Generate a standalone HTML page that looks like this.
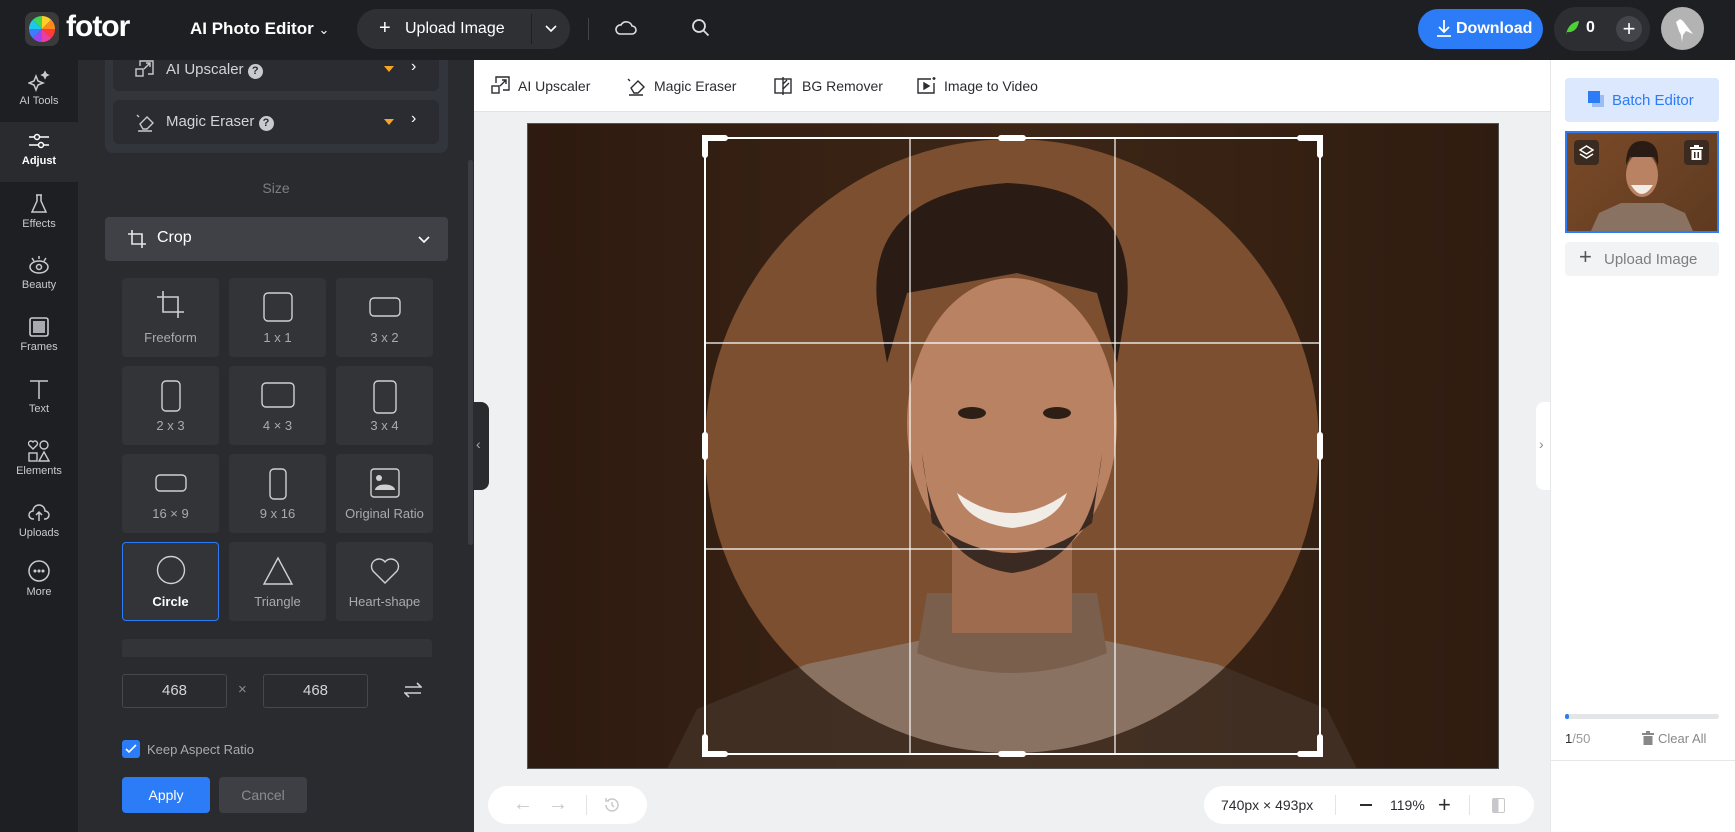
<!DOCTYPE html>
<html><head><meta charset="utf-8"><style>
*{box-sizing:border-box;margin:0;padding:0}
body{width:1735px;height:832px;overflow:hidden;font-family:"Liberation Sans",sans-serif;background:#1e1f23;position:relative}
.a{position:absolute}
.hdr{left:0;top:0;width:1735px;height:60px;background:#1e1f23}
.side{left:0;top:60px;width:78px;height:772px;background:#1e1f23}
.si{position:absolute;left:0;width:78px;text-align:center;color:#c9cacd;font-size:11px}
.si svg{display:block;margin:0 auto 3px}
.panel{left:78px;top:60px;width:396px;height:772px;background:#2a2b2f;overflow:hidden}
.cell{position:absolute;width:97px;height:79px;background:#333438;border-radius:4px;color:#a9aaae;font-size:13px;text-align:center}
.cell svg{position:absolute;left:50%;transform:translateX(-50%);top:14px}
.cell span{position:absolute;left:0;right:0;top:52px}
.tb{color:#2b2c30;font-size:14px;top:78px}
</style></head><body>
<div class="a hdr">
 <svg class="a" style="left:25px;top:12px" width="34" height="34" viewBox="0 0 34 34"><rect width="34" height="34" rx="8" fill="#3a3a3a"/><g transform="translate(17 17)">
 <path d="M0 0L0-13A13 13 0 0 1 9.2-9.2Z" fill="#ffcf26"/><path d="M0 0L9.2-9.2A13 13 0 0 1 13 0Z" fill="#ff8a1c"/><path d="M0 0L13 0A13 13 0 0 1 9.2 9.2Z" fill="#ff3b3b"/><path d="M0 0L9.2 9.2A13 13 0 0 1 0 13Z" fill="#e83fa0"/><path d="M0 0L0 13A13 13 0 0 1-9.2 9.2Z" fill="#9b45f0"/><path d="M0 0L-9.2 9.2A13 13 0 0 1-13 0Z" fill="#3d7bff"/><path d="M0 0L-13 0A13 13 0 0 1-9.2-9.2Z" fill="#1fc8e8"/><path d="M0 0L-9.2-9.2A13 13 0 0 1 0-13Z" fill="#3fd65a"/></g></svg>
 <div class="a" style="left:66px;top:10px;color:#fff;font-size:30px;font-weight:bold;letter-spacing:-1px">fotor</div>
 <div class="a" style="left:190px;top:19px;color:#fff;font-size:17px;font-weight:bold">AI Photo Editor <span style="font-weight:normal;font-size:13px">&#8964;</span></div>
 <div class="a" style="left:357px;top:9px;width:213px;height:40px;border-radius:20px;background:#2f3034"></div>
 <div class="a" style="left:379px;top:17px;color:#fff;font-size:20px">+</div>
 <div class="a" style="left:405px;top:20px;color:#fff;font-size:16px">Upload Image</div>
 <div class="a" style="left:531px;top:14px;width:1px;height:30px;background:#1e1f23"></div>
 <svg class="a" style="left:544px;top:24px" width="14" height="10"><path d="M2 2l5 5 5-5" stroke="#fff" stroke-width="1.6" fill="none"/></svg>
 <div class="a" style="left:588px;top:18px;width:1px;height:22px;background:#444"></div>
 <svg class="a" style="left:614px;top:18px" width="24" height="20"><path d="M6 16h12a4 4 0 0 0 0-8 6 6 0 0 0-11-1 4.5 4.5 0 0 0-1 9z" stroke="#ddd" stroke-width="1.6" fill="none"/></svg>
 <svg class="a" style="left:691px;top:18px" width="20" height="20"><circle cx="8" cy="8" r="6" stroke="#ddd" stroke-width="1.8" fill="none"/><path d="M12.5 12.5l5 5" stroke="#ddd" stroke-width="1.8"/></svg>
 <div class="a" style="left:1418px;top:9px;width:125px;height:40px;border-radius:20px;background:#2b7cf6"></div>
 <svg class="a" style="left:1435px;top:19px" width="18" height="18"><path d="M9 1v12M4 8l5 5 5-5M2 17h14" stroke="#fff" stroke-width="1.8" fill="none"/></svg>
 <div class="a" style="left:1456px;top:20px;color:#fff;font-size:16px;font-weight:bold">Download</div>
 <div class="a" style="left:1554px;top:7px;width:96px;height:44px;border-radius:22px;background:#2d2e32"></div>
 <svg class="a" style="left:1564px;top:19px" width="16" height="18"><path d="M2 16C3 8 8 3 15 2 14 10 9 14 3 13" fill="#4cd137"/></svg>
 <div class="a" style="left:1586px;top:19px;color:#fff;font-size:16px;font-weight:bold">0</div>
 <div class="a" style="left:1616px;top:16px;width:26px;height:26px;border-radius:13px;background:#44454a;color:#fff;font-size:22px;line-height:25px;text-align:center">+</div>
 <div class="a" style="left:1661px;top:7px;width:43px;height:43px;border-radius:22px;background:#b3b3b3"></div>
 <svg class="a" style="left:1670px;top:14px" width="26" height="30"><path d="M6 8l4-3 3 2 10 13-7-3-3 4-1 7-1-7-2-4z" fill="#fff"/></svg>
</div>

<div class="a side">
 <div class="si" style="top:10px"><svg width="22" height="22" viewBox="0 0 22 22" fill="none" stroke="#c9cacd" stroke-width="1.5"><path d="M8 6l2 5 5 2-5 2-2 5-2-5-5-2 5-2z"/><path d="M17 2l1 2 2 1-2 1-1 2-1-2-2-1 2-1z" fill="#c9cacd"/></svg>AI Tools</div>
 <div class="a" style="left:0;top:62px;width:78px;height:60px;background:#2a2b2f"></div>
 <div class="si" style="top:70px;color:#fff;font-weight:bold"><svg width="22" height="22" viewBox="0 0 22 22" fill="none" stroke="#fff" stroke-width="1.5"><path d="M1 7h20M1 15h20"/><circle cx="9" cy="7" r="2.5" fill="#2a2b2f"/><circle cx="13" cy="15" r="2.5" fill="#2a2b2f"/></svg>Adjust</div>
 <div class="si" style="top:133px"><svg width="22" height="22" viewBox="0 0 22 22" fill="none" stroke="#c9cacd" stroke-width="1.5"><path d="M8 2h6M9 2v6L4 19h14L13 8V2"/></svg>Effects</div>
 <div class="si" style="top:194px"><svg width="24" height="22" viewBox="0 0 24 22" fill="none" stroke="#c9cacd" stroke-width="1.5"><ellipse cx="12" cy="13" rx="9" ry="6"/><circle cx="12" cy="13" r="2.5"/><path d="M12 2v3M5 4l2 3M19 4l-2 3"/></svg>Beauty</div>
 <div class="si" style="top:256px"><svg width="22" height="22" viewBox="0 0 22 22"><rect x="2" y="2" width="18" height="18" rx="2" fill="none" stroke="#c9cacd" stroke-width="1.6"/><rect x="5" y="5" width="12" height="12" fill="#a9aab0"/></svg>Frames</div>
 <div class="si" style="top:318px"><svg width="22" height="22" viewBox="0 0 22 22" fill="none" stroke="#c9cacd" stroke-width="1.5"><path d="M2 3h18M11 3v18"/></svg>Text</div>
 <div class="si" style="top:380px"><svg width="22" height="22" viewBox="0 0 22 22" fill="none" stroke="#c9cacd" stroke-width="1.4"><path d="M5 9L1 5a2 2 0 0 1 4-3 2 2 0 0 1 4 3z"/><circle cx="16" cy="5" r="4"/><rect x="1" y="13" width="8" height="8"/><path d="M16 12l5 9h-10z"/></svg>Elements</div>
 <div class="si" style="top:442px"><svg width="24" height="22" viewBox="0 0 24 22" fill="none" stroke="#c9cacd" stroke-width="1.5"><path d="M7 17H6a4 4 0 0 1 0-8 6 6 0 0 1 12 0 4 4 0 0 1 0 8h-1M12 19v-9M9 13l3-3 3 3"/></svg>Uploads</div>
 <div class="si" style="top:499px"><svg width="24" height="24" viewBox="0 0 24 24" fill="none" stroke="#c9cacd" stroke-width="1.5"><circle cx="12" cy="12" r="10"/><circle cx="8" cy="12" r=".8" fill="#c9cacd"/><circle cx="12" cy="12" r=".8" fill="#c9cacd"/><circle cx="16" cy="12" r=".8" fill="#c9cacd"/></svg>More</div>
</div>

<div class="a panel">
 <div class="a" style="left:27px;top:-10px;width:343px;height:103px;border-radius:8px;background:#32353c"></div>
 <div class="a" style="left:35px;top:-10px;width:326px;height:41px;border-radius:6px;background:#2a2c32"></div>
 <div class="a" style="left:35px;top:40px;width:326px;height:44px;border-radius:6px;background:#2a2c32"></div>
 <svg class="a" style="left:57px;top:0px" width="20" height="18" fill="none" stroke="#c9cacd" stroke-width="1.4"><rect x="1" y="9" width="7" height="7"/><path d="M5 6V1h13v13h-5M9 9l6-6M11 3h4v4"/></svg>
 <div class="a" style="left:88px;top:1px;color:#d3d4d7;font-size:15px">AI Upscaler <span style="display:inline-block;width:15px;height:15px;border-radius:8px;background:#c9cacd;color:#2a2c32;font-size:11px;text-align:center;line-height:15px;font-weight:bold">?</span></div>
 <div class="a" style="left:306px;top:6px;width:0;height:0;border-left:5px solid transparent;border-right:5px solid transparent;border-top:6px solid #f5a623"></div>
 <div class="a" style="left:333px;top:-2px;color:#fff;font-size:16px">&#8250;</div>
 <svg class="a" style="left:57px;top:52px" width="20" height="20" fill="none" stroke="#c9cacd" stroke-width="1.4"><path d="M5 12l7-7 6 6-6 6H8zM3 19h14M2 3l2 2"/></svg>
 <div class="a" style="left:88px;top:53px;color:#d3d4d7;font-size:15px">Magic Eraser <span style="display:inline-block;width:15px;height:15px;border-radius:8px;background:#c9cacd;color:#2a2c32;font-size:11px;text-align:center;line-height:15px;font-weight:bold">?</span></div>
 <div class="a" style="left:306px;top:59px;width:0;height:0;border-left:5px solid transparent;border-right:5px solid transparent;border-top:6px solid #f5a623"></div>
 <div class="a" style="left:333px;top:50px;color:#fff;font-size:16px">&#8250;</div>
 <div class="a" style="left:0;width:396px;top:120px;text-align:center;color:#7d7e83;font-size:14px">Size</div>
 <div class="a" style="left:27px;top:157px;width:343px;height:44px;border-radius:4px;background:#404146"></div>
 <svg class="a" style="left:49px;top:169px" width="20" height="20" fill="none" stroke="#e6e6e6" stroke-width="1.6"><path d="M1 5h14v14M5 1v14h14"/></svg>
 <div class="a" style="left:79px;top:169px;color:#fff;font-size:16px">Crop</div>
 <svg class="a" style="left:339px;top:175px" width="14" height="10"><path d="M2 2l5 5 5-5" stroke="#fff" stroke-width="1.6" fill="none"/></svg>

 <div class="cell" style="left:44px;top:218px"><svg width="30" height="30" fill="none" stroke="#d0d0d0" stroke-width="1.6" style="top:12px"><path d="M1 7h21v21M7 1v21h21"/></svg><span>Freeform</span></div>
 <div class="cell" style="left:151px;top:218px"><svg width="30" height="30"><rect x="1" y="1" width="28" height="28" rx="4" fill="none" stroke="#d0d0d0" stroke-width="1.4"/></svg><span>1 x 1</span></div>
 <div class="cell" style="left:258px;top:218px"><svg width="32" height="22" style="top:18px"><rect x="1" y="2" width="30" height="18" rx="4" fill="none" stroke="#d0d0d0" stroke-width="1.4"/></svg><span>3 x 2</span></div>
 <div class="cell" style="left:44px;top:306px"><svg width="22" height="32"><rect x="2" y="1" width="18" height="30" rx="4" fill="none" stroke="#d0d0d0" stroke-width="1.4"/></svg><span>2 x 3</span></div>
 <div class="cell" style="left:151px;top:306px"><svg width="34" height="26" style="top:16px"><rect x="1" y="1" width="32" height="24" rx="4" fill="none" stroke="#d0d0d0" stroke-width="1.4"/></svg><span>4 × 3</span></div>
 <div class="cell" style="left:258px;top:306px"><svg width="26" height="34"><rect x="2" y="1" width="22" height="32" rx="4" fill="none" stroke="#d0d0d0" stroke-width="1.4"/></svg><span>3 x 4</span></div>
 <div class="cell" style="left:44px;top:394px"><svg width="32" height="20" style="top:19px"><rect x="1" y="2" width="30" height="16" rx="4" fill="none" stroke="#d0d0d0" stroke-width="1.4"/></svg><span>16 × 9</span></div>
 <div class="cell" style="left:151px;top:394px"><svg width="20" height="32"><rect x="2" y="1" width="16" height="30" rx="4" fill="none" stroke="#d0d0d0" stroke-width="1.4"/></svg><span>9 x 16</span></div>
 <div class="cell" style="left:258px;top:394px"><svg width="30" height="30"><rect x="1" y="1" width="28" height="28" rx="3" fill="none" stroke="#d0d0d0" stroke-width="1.4"/><circle cx="9" cy="10" r="3" fill="#d0d0d0"/><path d="M5 22a9 5 0 0 1 20 0z" fill="#d0d0d0"/></svg><span>Original Ratio</span></div>
 <div class="cell" style="left:44px;top:482px;border:1.5px solid #2b7cf6;color:#fff;font-weight:bold"><svg width="30" height="30" style="top:12px"><circle cx="15" cy="15" r="13.5" fill="none" stroke="#d0d0d0" stroke-width="1.4"/></svg><span style="top:51px">Circle</span></div>
 <div class="cell" style="left:151px;top:482px"><svg width="32" height="30"><path d="M16 2L30 28H2z" fill="none" stroke="#d0d0d0" stroke-width="1.4"/></svg><span>Triangle</span></div>
 <div class="cell" style="left:258px;top:482px"><svg width="32" height="30"><path d="M16 27L4 15A7 7 0 0 1 16 6a7 7 0 0 1 12 9z" fill="none" stroke="#d0d0d0" stroke-width="1.4"/></svg><span>Heart-shape</span></div>
 <div class="a" style="left:44px;top:579px;width:310px;height:18px;background:#333438;border-radius:4px 4px 0 0"></div>

 <div class="a" style="left:44px;top:614px;width:105px;height:34px;border:1.5px solid #46474c;border-radius:3px;color:#d3d4d7;font-size:15px;text-align:center;line-height:31px">468</div>
 <div class="a" style="left:160px;top:621px;color:#8a8b90;font-size:15px">×</div>
 <div class="a" style="left:185px;top:614px;width:105px;height:34px;border:1.5px solid #46474c;border-radius:3px;color:#d3d4d7;font-size:15px;text-align:center;line-height:31px">468</div>
 <svg class="a" style="left:326px;top:622px" width="18" height="16" fill="none" stroke="#d0d0d0" stroke-width="1.6"><path d="M1 5h16l-4-4M17 11H1l4 4"/></svg>
 <div class="a" style="left:44px;top:680px;width:18px;height:18px;border-radius:3px;background:#2b7cf6"></div>
 <svg class="a" style="left:47px;top:684px" width="12" height="10"><path d="M1 5l3 3 7-7" stroke="#fff" stroke-width="1.6" fill="none"/></svg>
 <div class="a" style="left:69px;top:682px;color:#a9aaae;font-size:13px">Keep Aspect Ratio</div>
 <div class="a" style="left:44px;top:717px;width:88px;height:36px;border-radius:4px;background:#2b7cf6;color:#fff;font-size:14px;text-align:center;line-height:36px">Apply</div>
 <div class="a" style="left:141px;top:717px;width:88px;height:36px;border-radius:4px;background:#3e3f44;color:#8a8b90;font-size:14px;text-align:center;line-height:36px">Cancel</div>
 <div class="a" style="left:390px;top:100px;width:5px;height:385px;border-radius:3px;background:#3c3d42"></div>
</div>

<div class="a" style="left:474px;top:60px;width:1076px;height:772px;background:#eff0f2"></div>
<div class="a" style="left:474px;top:60px;width:1076px;height:52px;background:#fff;border-bottom:1px solid #e2e3e6"></div>
<svg class="a" style="left:491px;top:76px" width="20" height="20" fill="none" stroke="#2b2c30" stroke-width="1.4"><rect x="1" y="10" width="7" height="7"/><path d="M5 7V1h13v13h-6M9 10l6-6M11 4h4v4"/></svg>
<div class="a tb" style="left:518px">AI Upscaler</div>
<svg class="a" style="left:626px;top:76px" width="20" height="20" fill="none" stroke="#2b2c30" stroke-width="1.4"><path d="M5 12l7-7 6 6-6 6H8zM3 19h14M2 3l2 2"/></svg>
<div class="a tb" style="left:654px">Magic Eraser</div>
<svg class="a" style="left:774px;top:77px" width="18" height="18" fill="none" stroke="#2b2c30" stroke-width="1.4"><rect x="1" y="2" width="16" height="14"/><path d="M9 0v18M9 12l6-6M9 7l4-4"/></svg>
<div class="a tb" style="left:802px">BG Remover</div>
<svg class="a" style="left:917px;top:77px" width="20" height="18" fill="none" stroke="#2b2c30" stroke-width="1.4"><path d="M14 2H1v14h16V6"/><path d="M7 6l5 3-5 3z" fill="#2b2c30"/><path d="M17 0v3M15.5 1.5h3"/></svg>
<div class="a tb" style="left:944px">Image to Video</div>

<svg class="a" style="left:527px;top:123px" width="972" height="646" viewBox="0 0 972 646">
 <defs>
  <clipPath id="c"><circle cx="485" cy="323" r="307"/></clipPath>
  <linearGradient id="bg" x1="0" x2="1"><stop offset="0" stop-color="#2d1a10"/><stop offset=".5" stop-color="#3d2616"/><stop offset="1" stop-color="#2f1c10"/></linearGradient>
 </defs>
 <rect width="972" height="646" fill="url(#bg)"/>
 <g opacity=".55">
  <path d="M140 646l30-60 110-45 120-25h170l120 25 110 45 30 60z" fill="#4a3a30"/>
  <path d="M350 180q-10-110 130-120 130 5 120 120l-10 60-20-70-80-20-110 20-20 70z" fill="#1d130d"/>
  <ellipse cx="485" cy="300" rx="105" ry="145" fill="#5a3b28"/>
 </g>
 <g clip-path="url(#c)">
  <rect width="972" height="646" fill="#7b4f2f"/>
  <path d="M140 646l30-60 110-45 120-25h170l120 25 110 45 30 60z" fill="#8a7262"/>
  <path d="M400 470h170l10 60q-95 40-190 0z" fill="#7a5f4d"/>
  <rect x="425" y="400" width="120" height="110" fill="#9e6b4f"/>
  <ellipse cx="485" cy="300" rx="105" ry="145" fill="#b98263"/>
  <path d="M395 330q10 110 90 120 80-10 90-120l-10 70q-80 60-160 0z" fill="#3a2a22"/>
  <path d="M430 370q55 40 110 0-10 30-55 35-45-5-55-35z" fill="#f1ece6"/>
  <path d="M350 180q-10-110 130-120 130 5 120 120l-10 60-20-70-80-20-110 20-20 70z" fill="#2a1c14"/>
  <ellipse cx="445" cy="290" rx="14" ry="6" fill="#2d1e16"/><ellipse cx="530" cy="290" rx="14" ry="6" fill="#2d1e16"/>
 </g>
 <rect x="0.5" y="0.5" width="971" height="645" fill="none" stroke="#555" stroke-width="1"/>
 <g stroke="#fff" fill="none">
  <rect x="178" y="15" width="615" height="616" stroke-width="2"/>
  <path d="M383 15v616M588 15v616M178 220h615M178 426h615" stroke-width="1.2"/>
  <path d="M178 32V15h20M773 15h20v17M793 614v17h-20M198 631h-20v-17" stroke-width="6" stroke-linecap="round"/>
  <path d="M474 15h22M474 631h22M178 312v22M793 312v22" stroke-width="6" stroke-linecap="round"/>
 </g>
</svg>

<div class="a" style="left:474px;top:402px;width:15px;height:88px;border-radius:0 8px 8px 0;background:#2a2b2f"></div>
<div class="a" style="left:476px;top:436px;color:#aaa;font-size:14px">&#8249;</div>
<div class="a" style="left:1536px;top:402px;width:14px;height:88px;border-radius:8px 0 0 8px;background:#fff"></div>
<div class="a" style="left:1539px;top:436px;color:#888;font-size:14px">&#8250;</div>

<div class="a" style="left:488px;top:786px;width:159px;height:38px;border-radius:19px;background:#fff"></div>
<div class="a" style="left:513px;top:793px;color:#c8c8cc;font-size:20px">&#8592;</div>
<div class="a" style="left:548px;top:793px;color:#c8c8cc;font-size:20px">&#8594;</div>
<div class="a" style="left:586px;top:795px;width:1px;height:20px;background:#e4e4e6"></div>
<svg class="a" style="left:603px;top:796px" width="18" height="18" fill="none" stroke="#c8c8cc" stroke-width="1.5"><path d="M3 9a6 6 0 1 0 2-4.5M3 2v3h3M9 6v3l2 2"/></svg>
<div class="a" style="left:1204px;top:786px;width:330px;height:38px;border-radius:19px;background:#fff"></div>
<div class="a" style="left:1221px;top:797px;color:#2b2c30;font-size:14px">740px × 493px</div>
<div class="a" style="left:1335px;top:795px;width:1px;height:20px;background:#e4e4e6"></div>
<div class="a" style="left:1360px;top:804px;width:12px;height:2px;background:#2b2c30"></div>
<div class="a" style="left:1390px;top:797px;color:#2b2c30;font-size:14px">119%</div>
<div class="a" style="left:1438px;top:792px;color:#2b2c30;font-size:22px">+</div>
<div class="a" style="left:1469px;top:795px;width:1px;height:20px;background:#e4e4e6"></div>
<div class="a" style="left:1492px;top:798px;width:13px;height:15px;border:1.5px solid #c8c8cc;border-radius:2px;background:linear-gradient(90deg,#c8c8cc 50%,#fff 50%)"></div>

<div class="a" style="left:1550px;top:60px;width:185px;height:772px;background:#fff;border-left:1px solid #e6e7ea"></div>
<div class="a" style="left:1565px;top:78px;width:154px;height:44px;border-radius:4px;background:#dbe8fd"></div>
<svg class="a" style="left:1587px;top:90px" width="18" height="18"><rect x="5" y="5" width="12" height="12" fill="#9cbcf5"/><rect x="1" y="1" width="12" height="12" fill="#2b7cf6"/></svg>
<div class="a" style="left:1612px;top:92px;color:#2b7cf6;font-size:15px">Batch Editor</div>
<div class="a" style="left:1565px;top:131px;width:154px;height:102px;border:2px solid #2b7cf6;background:linear-gradient(135deg,#7a4a28,#5e3a20)"></div>
<svg class="a" style="left:1567px;top:133px" width="150" height="98"><path d="M24 98l8-18 22-10h42l22 10 8 18z" fill="#8a7262"/><ellipse cx="75" cy="42" rx="16" ry="22" fill="#b98263"/><path d="M59 32q0-24 16-24 18 0 16 24l-4-8-24 0z" fill="#2a1c14"/><path d="M64 52q11 18 22 0z" fill="#f1ece6"/></svg>
<div class="a" style="left:1574px;top:140px;width:25px;height:25px;border-radius:4px;background:#3a2a20"></div>
<svg class="a" style="left:1579px;top:145px" width="15" height="15" fill="none" stroke="#fff" stroke-width="1.5"><path d="M7.5 1L14 5 7.5 9 1 5zM1 9l6.5 4L14 9"/></svg>
<div class="a" style="left:1684px;top:140px;width:25px;height:25px;border-radius:4px;background:#3a2a20"></div>
<svg class="a" style="left:1690px;top:145px" width="13" height="15" fill="#fff"><rect x="0" y="2" width="13" height="2"/><rect x="4" y="0" width="5" height="2"/><path d="M1.5 5h10v10h-10zM4 7v6h1.5V7zM7.5 7v6H9V7z" fill-rule="evenodd"/></svg>
<div class="a" style="left:1565px;top:242px;width:154px;height:34px;border-radius:4px;background:#f2f3f5"></div>
<div class="a" style="left:1579px;top:244px;color:#555;font-size:22px">+</div>
<div class="a" style="left:1604px;top:251px;color:#7d7e83;font-size:15px">Upload Image</div>
<div class="a" style="left:1565px;top:714px;width:154px;height:5px;border-radius:3px;background:#e4e5e8"></div>
<div class="a" style="left:1565px;top:714px;width:4px;height:5px;border-radius:3px;background:#2b7cf6"></div>
<div class="a" style="left:1565px;top:731px;font-size:13px;color:#2b2c30">1<span style="color:#999">/50</span></div>
<svg class="a" style="left:1642px;top:731px" width="12" height="14" fill="#888"><rect x="0" y="2" width="12" height="2"/><rect x="4" y="0" width="4" height="2"/><rect x="1.5" y="5" width="9" height="9"/></svg>
<div class="a" style="left:1658px;top:731px;font-size:13px;color:#888">Clear All</div>
<div class="a" style="left:1550px;top:760px;width:185px;height:1px;background:#e6e7ea"></div>
</body></html>
